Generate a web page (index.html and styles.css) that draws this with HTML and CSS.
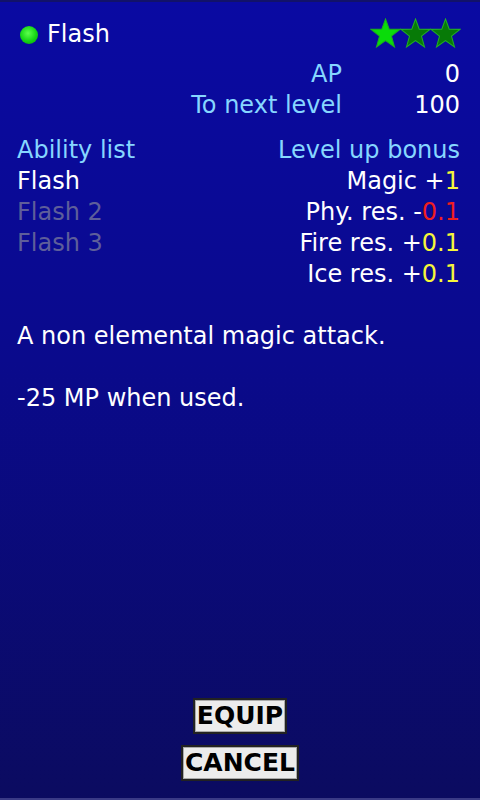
FILE: index.html
```html
<!DOCTYPE html>
<html lang="en">

<head>
  <meta charset="utf-8">
  <title>Ability - Flash</title>
  <link rel="stylesheet" href="styles.css">
</head>

<body>
  <div class="screen">
    <div class="head">
      <div class="name"><span class="dot"></span>Flash</div>
      <div class="stars">
        <svg class="star" viewBox="0 0 30 30"><polygon class="on" points="15,1 18.6,10.9 29,11 20.8,17.5 23.7,28 15,21.8 6.3,28 9.2,17.5 1,11 11.4,10.9"/></svg>
        <svg class="star" viewBox="0 0 30 30"><polygon class="off" points="15,1 18.6,10.9 29,11 20.8,17.5 23.7,28 15,21.8 6.3,28 9.2,17.5 1,11 11.4,10.9"/></svg>
        <svg class="star" viewBox="0 0 30 30"><polygon class="off" points="15,1 18.6,10.9 29,11 20.8,17.5 23.7,28 15,21.8 6.3,28 9.2,17.5 1,11 11.4,10.9"/></svg>
      </div>
    </div>

    <div class="stats">
      <span class="label">AP</span><span class="val">0</span>
      <span class="label">To next level</span><span class="val">100</span>
    </div>

    <div class="lists">
      <div class="col">
        <div class="label">Ability list</div>
        <div>Flash</div>
        <div class="locked">Flash 2</div>
        <div class="locked">Flash 3</div>
      </div>
      <div class="col right">
        <div class="label">Level up bonus</div>
        <div>Magic +<span class="up">1</span></div>
        <div>Phy. res. -<span class="down">0.1</span></div>
        <div>Fire res. +<span class="up">0.1</span></div>
        <div>Ice res. +<span class="up">0.1</span></div>
      </div>
    </div>

    <div class="desc">
      <p>A non elemental magic attack.</p>
      <p>-25 MP when used.</p>
    </div>

    <div class="buttons">
      <button class="btn">EQUIP</button>
      <button class="btn">CANCEL</button>
    </div>
  </div>
</body>

</html>
```

FILE: styles.css
```css
* {
  box-sizing: border-box;
}

body {
  margin: 0;
  font-family: "DejaVu Sans", Verdana, sans-serif;
  font-size: 24px;
  line-height: 31px;
  color: #fff;
}

.screen {
  height: 800px;
  display: flex;
  flex-direction: column;
  padding: 16px 20px 17px 17px;
  border-top: 2px solid #12126a;
  border-bottom: 2px solid #3a3a86;
  background: linear-gradient(#0a0aa2, #0a0a8c 45%, #0b0b60);
}

.head {
  display: flex;
  justify-content: space-between;
  align-items: center;
  height: 31px;
}

.name {
  display: flex;
  align-items: center;
  gap: 9px;
  margin-left: 3px;
  padding-top: 2px;
}

.dot {
  width: 18px;
  height: 18px;
  border-radius: 50%;
  background: radial-gradient(circle at 45% 40%, #5cff4c, #14d414 55%, #0a9a0a);
}

.stars {
  display: flex;
  margin-right: -1px;
}

.star {
  width: 31px;
  height: 31px;
  margin-left: -1px;
}

.star .on {
  fill: #0adc0a;
  stroke: #1ab01a;
  stroke-width: 1;
}

.star .off {
  fill: #077a07;
  stroke: #22b022;
  stroke-width: 1;
}

.label {
  color: #86d6ff;
}

.stats {
  display: grid;
  grid-template-columns: 1fr 118px;
  text-align: right;
  margin-top: 10px;
}

.lists {
  display: flex;
  justify-content: space-between;
  margin-top: 14px;
}

.right {
  text-align: right;
}

.locked {
  color: #5e5e9a;
}

.up {
  color: #f6f63a;
}

.down {
  color: #f01e1e;
}

.desc {
  margin-top: 31px;
}

.desc p {
  margin: 0 0 31px;
}

.buttons {
  margin-top: auto;
  display: flex;
  flex-direction: column;
  align-items: center;
  gap: 11px;
  padding-left: 3px;
}

.btn {
  font-family: "DejaVu Sans", Verdana, sans-serif;
  font-weight: bold;
  font-size: 25px;
  line-height: 30px;
  height: 36px;
  padding: 0 2px;
  color: #000;
  background: #ececec;
  border: 2px solid #222;
  box-shadow: inset 0 0 0 1px #aaa;
}
```
